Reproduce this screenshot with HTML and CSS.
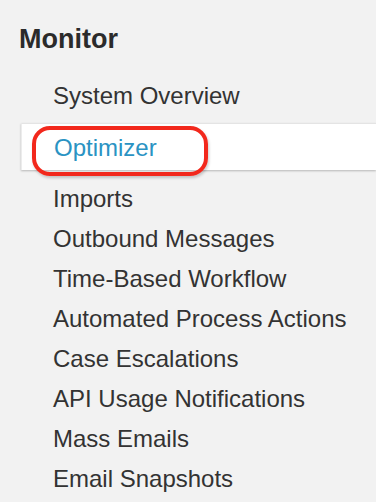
FILE: index.html
```html
<!DOCTYPE html>
<html lang="en">
<head>
    <meta charset="UTF-8">
    <meta name="viewport" content="width=device-width, initial-scale=1.0">
    <title>Monitor</title>
    <link rel="stylesheet" href="styles.css">
</head>
<body>
    <div class="sidebar">
        <h2>Monitor</h2>
        <ul class="menu">
            <li><a href="#">System Overview</a></li>
            <li class="active"><a href="#">Optimizer</a><span class="mark"></span></li>
            <li><a href="#">Imports</a></li>
            <li><a href="#">Outbound Messages</a></li>
            <li><a href="#">Time-Based Workflow</a></li>
            <li><a href="#">Automated Process Actions</a></li>
            <li><a href="#">Case Escalations</a></li>
            <li><a href="#">API Usage Notifications</a></li>
            <li><a href="#">Mass Emails</a></li>
            <li><a href="#">Email Snapshots</a></li>
        </ul>
    </div>
</body>
</html>
```

FILE: styles.css
```css
body {
    margin: 0;
    background-color: #f2f2f2;
    font-family: 'Liberation Sans', Arial, sans-serif;
    color: #333;
}
.sidebar {
    padding: 23px 0 0 19px;
}
.sidebar h2 {
    margin: 0 0 21px;
    font-size: 27px;
    line-height: 32px;
    font-weight: bold;
    color: #2b2b2b;
}
.menu {
    list-style: none;
    margin: 0;
    padding: 0;
}
.menu li {
    height: 40px;
    line-height: 40px;
    font-size: 24px;
    padding-left: 34px;
}
.menu a {
    color: #333;
    text-decoration: none;
}
.menu li.active {
    position: relative;
    height: 47px;
    line-height: 47px;
    margin: 7px 0 9px 2px;
    padding-left: 32px;
    background-color: #fff;
    border-top: 1px solid #e4e4e4;
    border-left: 1px solid #ececec;
    box-shadow: 0 1px 2px rgba(0, 0, 0, 0.25);
    box-sizing: border-box;
}
.menu li.active a {
    color: #2a93c3;
}
.mark {
    position: absolute;
    left: 10px;
    top: 2px;
    width: 168px;
    height: 42px;
    border: 4px solid #f2281c;
    border-radius: 18px;
    box-shadow: 1px 2px 3px rgba(0, 0, 0, 0.2);
}
```
